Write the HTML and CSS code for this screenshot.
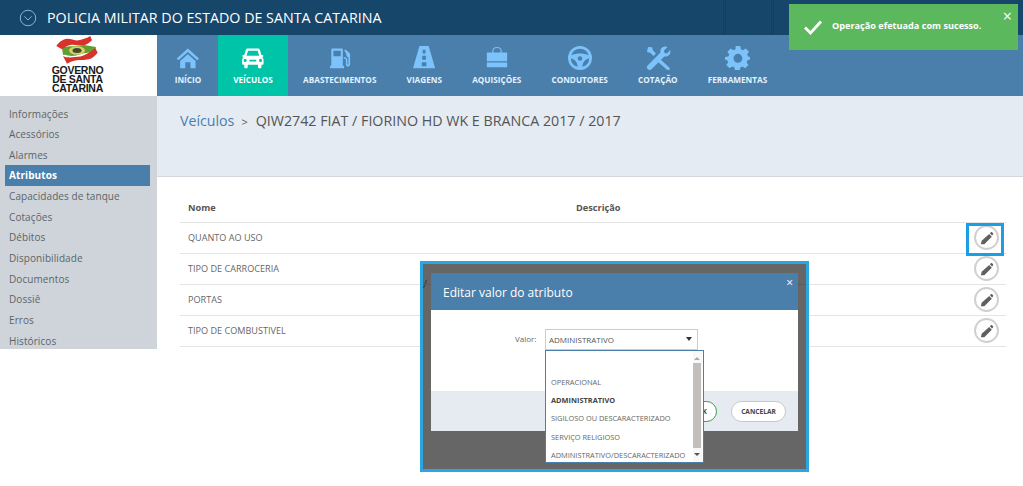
FILE: index.html
```html
<!DOCTYPE html>
<html lang="pt-BR">
<head>
<meta charset="utf-8">
<title>Atributos</title>
<link rel="stylesheet" href="styles.css">
</head>
<body>
<header class="topbar">
  <svg class="topbar-icon" viewBox="0 0 20 20" width="18" height="18"><circle cx="10" cy="10" r="8.600"/><path d="M6 8.200l4 4 4-4"/></svg>
  <span class="topbar-title">POLICIA MILITAR DO ESTADO DE SANTA CATARINA</span>
  <i class="topbar-sep topbar-sep-first"></i>
  <i class="topbar-sep"></i>
</header>
<div class="navrow">
  <div class="logo">
    <svg class="logo-mark" viewBox="0 0 44 28" width="44" height="28">
      <path d="M6 12C13 9 21 11 28 9L40 11 38 17C30 15 23 20 16 20 12 20 9 18 7 19Z" fill="#5fa030"/>
      <ellipse cx="21" cy="14.500" rx="8" ry="4.200" fill="#d9cf63"/>
      <ellipse cx="21" cy="14.500" rx="4.500" ry="2.500" fill="#3f4a30"/>
      <path d="M.3 10C3 6 7 3 11 2.700 15 2.500 19 5 22.700 4.300 27 3.500 31 2 34.300 0L36 4.300C33 7 30 9 27.700 9.300 23 10 20 8.500 16 8.700 12 9 9 11 6 13.300Z" fill="#d8322a"/>
      <path d="M7 20C11 22 15 21.500 19 21 23 20.500 26 20.500 29 18.700 33 17 36 15 39.300 12L41.700 16.700C39 20 36 22.500 32.700 23.300 28 24.500 25 23.500 21 24.300 17 25 14 26 11 27.700Z" fill="#d8322a"/>
    </svg>
    <div class="logo-text"><div>GOVERNO</div><div>DE SANTA</div><div>CATARINA</div></div>
  </div>
  <nav class="mainnav">
    <a class="nav-item nav-first">
      <svg viewBox="-2 -2 30 28"><path d="M13 1L0 12.500l2 2L13 5l11 9.500 2-2zM4 15.500V24h6v-7h6v7h6v-8.500L13 7.500z"/></svg>
      <span>INÍCIO</span>
    </a>
    <a class="nav-item nav-active">
      <svg viewBox="-2 -2 30 28"><path d="M7 1h12c1 0 1.800.6 2.200 1.600L23 8.500h2V11h-1.200C25 12 25.500 13 25.500 14v5c0 .6-.4 1-1 1H23v2.500c0 .8-.6 1.500-1.500 1.500h-1c-.9 0-1.500-.7-1.500-1.500V20H7v2.500C7 23.300 6.400 24 5.500 24h-1C3.600 24 3 23.300 3 22.500V20H1.500c-.6 0-1-.4-1-1v-5c0-1 .5-2 1.700-3H1V8.500h2l1.800-5.900C5.200 1.600 6 1 7 1zm.4 2.500L5.600 9.500h14.800l-1.800-6zM4 13a1.800 1.800 0 100 3.600A1.800 1.800 0 004 13zm18 0a1.800 1.800 0 100 3.600 1.800 1.800 0 000-3.600zM9 14v2h8v-2z" fill-rule="evenodd"/></svg>
      <span>VEÍCULOS</span>
    </a>
    <a class="nav-item">
      <svg viewBox="-2 -2 30 28"><path d="M4 1h11c1 0 1.500.6 1.500 1.500V21h1.500v3H1.500v-3H3V2.500C3 1.600 3.400 1 4 1zm1.500 2.500V10h8.500V3.500zM18 3l1.500-1 4.500 4c.6.500 1 1.300 1 2v11c0 1.800-1 3-2.700 3S20 20.800 20 19v-5c0-.6-.4-1-1-1h-1.500v-1.800H19c1.500 0 2.800 1.300 2.800 2.800v5c0 .6.200 1 .6 1s.6-.4.600-1V11c-1.500 0-2.500-1-2.500-2.500V7z" fill-rule="evenodd"/></svg>
      <span>ABASTECIMENTOS</span>
    </a>
    <a class="nav-item">
      <svg viewBox="0 0 24 26"><path d="M7 0h10l7 24H0zM10.500 4v4h3V4zm-.5 6.500v4.500h4v-4.500zM9.500 17.500V22h5v-4.500z" fill-rule="evenodd"/></svg>
      <span>VIAGENS</span>
    </a>
    <a class="nav-item">
      <svg viewBox="0 0 26 26"><path d="M8 7V4.500C8 2.500 10 1 13 1s5 1.500 5 3.500V7h-1.200V4.500c0-1.200-1.600-2.200-3.800-2.200S9.200 3.300 9.200 4.500V7zM2 7h22v9.500H2zM2 18h22v5H2z"/></svg>
      <span>AQUISIÇÕES</span>
    </a>
    <a class="nav-item">
      <svg viewBox="0 0 26 26"><path d="M13 0a13 13 0 100 26 13 13 0 000-26zm0 3a10 10 0 019.500 7c-3-1.400-6.300-2-9.500-2s-6.500.6-9.500 2A10 10 0 0113 3zM3 13.500c4 .4 7 3.500 7.500 9A10 10 0 013 13.500zm20 0a10 10 0 01-7.500 9c.5-5.500 3.500-8.600 7.500-9zM13 11a2.500 2.500 0 110 5 2.500 2.500 0 010-5z" fill-rule="evenodd"/></svg>
      <span>CONDUTORES</span>
    </a>
    <a class="nav-item">
      <svg viewBox="0 0 26 24"><path d="M3 1l4 .2 1 3.300 3 3-2.500 2.500-3-3L2 6zM20 .500c1 0 2 .2 2.500.7L19 4.500l.5 2.500 2.500.5L25.200 4c.6 2 .1 4-1.300 5.300-1.200 1.100-3 1.500-4.500 1.100L6.500 23.300c-1 1-2.600 1-3.600 0l-.3-.3c-1-1-1-2.600 0-3.600L15.500 6.600c-.5-1.600-.1-3.300 1-4.500C17.400 1.100 18.700.500 20 .500zM15.500 13.500l8.800 8c.8.800.8 2 0 2.400l-.4.100c-.8.400-1.600 0-2.200-.6l-8.700-7.400z"/></svg>
      <span>COTAÇÃO</span>
    </a>
    <a class="nav-item">
      <svg viewBox="-1 0 28 26"><path d="M10.500 0h5l.7 3.600 2.300 1 3-2 3.500 3.500-2 3 1 2.300L27 12v2.500l-3.600.9-1 2.300 2 3-3.500 3.500-3-2-2.300 1-.7 3.400h-5l-.7-3.400-2.300-1-3 2-3.500-3.500 2-3-1-2.300L-1 14.500V12l3.600-.6 1-2.300-2-3L5.100 2.600l3 2 2.300-1zM13 8.500a4.800 4.800 0 100 9.600 4.800 4.800 0 000-9.600z" fill-rule="evenodd"/></svg>
      <span>FERRAMENTAS</span>
    </a>
  </nav>
</div>
<div class="content">
  <aside class="sidebar">
    <a class="side-link">Informações</a>
    <a class="side-link">Acessórios</a>
    <a class="side-link">Alarmes</a>
    <a class="side-link side-active">Atributos</a>
    <a class="side-link">Capacidades de tanque</a>
    <a class="side-link">Cotações</a>
    <a class="side-link">Débitos</a>
    <a class="side-link">Disponibilidade</a>
    <a class="side-link">Documentos</a>
    <a class="side-link">Dossiê</a>
    <a class="side-link">Erros</a>
    <a class="side-link">Históricos</a>
  </aside>
  <main class="main">
    <div class="crumb">
      <a class="crumb-link">Veículos</a><span class="crumb-sep">&gt;</span><span class="crumb-text">QIW2742 FIAT / FIORINO HD WK E BRANCA 2017 / 2017</span>
    </div>
    <div class="table">
      <div class="row head"><div class="col-name">Nome</div><div class="col-desc">Descrição</div></div>
      <div class="row"><div class="col-name">QUANTO AO USO</div><div class="col-desc"></div><button class="edit"><svg viewBox="0 0 16 16"><path d="M1 15l.9-3.900L10.500 3.500l3 3L4.900 15.100zM11.300 2.700l1.200-1.200c.4-.4 1-.4 1.400 0l1 1c.4.4.4 1 0 1.400l-1.200 1.200z"/></svg></button></div>
      <div class="row"><div class="col-name">TIPO DE CARROCERIA</div><div class="col-desc"></div><button class="edit"><svg viewBox="0 0 16 16"><path d="M1 15l.9-3.900L10.500 3.500l3 3L4.900 15.100zM11.300 2.700l1.200-1.200c.4-.4 1-.4 1.400 0l1 1c.4.4.4 1 0 1.400l-1.200 1.200z"/></svg></button></div>
      <div class="row"><div class="col-name">PORTAS</div><div class="col-desc"></div><button class="edit"><svg viewBox="0 0 16 16"><path d="M1 15l.9-3.900L10.500 3.500l3 3L4.900 15.100zM11.300 2.700l1.200-1.200c.4-.4 1-.4 1.400 0l1 1c.4.4.4 1 0 1.400l-1.200 1.200z"/></svg></button></div>
      <div class="row"><div class="col-name">TIPO DE COMBUSTIVEL</div><div class="col-desc"></div><button class="edit"><svg viewBox="0 0 16 16"><path d="M1 15l.9-3.900L10.500 3.500l3 3L4.900 15.100zM11.300 2.700l1.200-1.200c.4-.4 1-.4 1.400 0l1 1c.4.4.4 1 0 1.400l-1.200 1.200z"/></svg></button></div>
      <div class="row"><div class="col-name"></div><div class="col-desc"></div><button class="edit"></button></div>
    </div>
  </main>
</div>

<div class="highlight"></div>

<div class="toast">
  <svg class="toast-check" viewBox="0 0 20 16" width="20" height="16"><path d="M2 8.500l5.500 5.500L18 2.500"/></svg>
  <span class="toast-text">Operação efetuada com sucesso.</span>
  <span class="toast-close">×</span>
</div>

<div class="frame">
  <span class="frame-slash">/</span>
  <div class="frame-line"></div>
  <section class="dialog">
    <div class="dialog-head"><h2>Editar valor do atributo</h2><span class="dialog-close">×</span></div>
    <div class="dialog-body">
      <label class="field-label">Valor:</label>
      <div class="select"><span>ADMINISTRATIVO</span><i class="caret"></i></div>
    </div>
    <div class="dialog-foot">
      <button class="btn btn-ok">OK</button>
      <button class="btn">CANCELAR</button>
    </div>
  </section>
  <div class="dropdown">
    <ul class="options">
      <li>&nbsp;</li>
      <li>OPERACIONAL</li>
      <li class="opt-selected">ADMINISTRATIVO</li>
      <li>SIGILOSO OU DESCARACTERIZADO</li>
      <li>SERVIÇO RELIGIOSO</li>
      <li>ADMINISTRATIVO/DESCARACTERIZADO</li>
    </ul>
    <div class="scroll"><i class="arrow-up"></i><b class="thumb"></b><i class="arrow-down"></i></div>
  </div>
</div>
</body>
</html>
```
FILE: styles.css
```css
* { box-sizing: border-box; }
html, body { margin: 0; padding: 0; height: 486px; overflow: hidden; background: #fff; }
body { position: relative; font-family: "Open Sans", sans-serif; color: #555; }

.topbar { height: 35px; background: #17466b; display: flex; align-items: center; padding-left: 19px; padding-right: 249px; }
.topbar-icon { fill: none; stroke: #7fb6e2; stroke-width: 1.100; flex: none; }
.topbar-title { margin-left: 10px; color: #fff; font-size: 14.250px; }
.topbar-sep { width: 3px; height: 35px; margin-left: 45px; border-left: 1px solid #134062; border-right: 1px solid #134062; }
.topbar-sep-first { margin-left: auto; }

.navrow { height: 61px; display: flex; }
.logo { width: 157px; background: #fff; display: flex; flex-direction: column; align-items: center; padding-top: 1px; padding-right: 2px; }
.logo-mark { flex: none; margin-right: -1px; }
.logo-text { font-family: "Liberation Sans", sans-serif; font-weight: 700; font-size: 10.500px; line-height: 9px; color: #1a1a1a; text-align: center; letter-spacing: -.3px; margin-top: 2px; }
.logo-text div { height: 9px; }

.mainnav { flex: 1; display: flex; background: #4a7eab; }
.nav-item { display: flex; flex-direction: column; align-items: center; padding: 11px 15.100px 0; color: #e3f2ff; font-size: 8.200px; font-weight: 700; white-space: nowrap; }
.nav-item svg { fill: #7cc3fb; height: 24px; width: auto; flex: none; }
.nav-item span { margin-top: 4px; line-height: 12px; }
.nav-first { padding-left: 18px; padding-right: 17px; width: 61px; }
.nav-active { background: #00c4a7; color: #fff; width: 70px; }
.nav-active svg { fill: #fff; }

.content { display: flex; height: 253px; overflow: hidden; }
.sidebar { width: 157px; flex: none; background: #ced4da; padding: 7.500px 7px 0 5px; }
.side-link { display: block; height: 20.650px; line-height: 20px; padding-left: 4px; font-size: 10px; letter-spacing: .08px; color: #5d6468; }
.side-active { background: #4a7eab; color: #fff; font-weight: 700; }

.main { flex: 1; min-width: 0; }
.crumb { height: 81px; background: #e4ebf3; border-bottom: 1px solid #d4d8dc; padding: 14px 0 0 23px; font-size: 14.250px; line-height: 22px; color: #555; white-space: nowrap; }
.crumb-link { color: #4a7eab; font-size: 14.200px; }
.crumb-sep { margin: 0 8px 0 7px; font-size: 11px; }
.table { margin: 15px 17px 0 23px; font-size: 9.100px; color: #666; }
.row { height: 31px; display: flex; align-items: center; padding-bottom: 1px; border-bottom: 1px solid #e4e4e4; position: relative; }
.head { font-size: 9.200px; font-weight: 700; color: #555; padding-bottom: 0; }
.col-name { width: 396px; padding-left: 8px; }
.col-desc { flex: 1; }
.edit { position: absolute; right: 7px; top: 2px; width: 25px; height: 25px; border-radius: 50%; border: 2px solid #d0d0d0; background: #fff; padding: 0; display: flex; align-items: center; justify-content: center; }
.edit svg { fill: #606060; width: 14px; height: 14px; }

.highlight { position: absolute; left: 966px; top: 223px; width: 38px; height: 33px; border: 3px solid #1c9fe2; }

.toast { position: absolute; left: 789px; top: 4px; width: 229px; height: 46px; background: #5cb85c; color: #fff; display: flex; align-items: flex-start; }
.toast-check { fill: none; stroke: #fff; stroke-width: 2.800; margin: 15px 0 0 14px; flex: none; }
.toast-text { margin: 15px 0 0 9px; font-size: 9.150px; font-weight: 700; line-height: 13px; white-space: nowrap; }
.toast-close { position: absolute; right: 6px; top: 4px; font-size: 16px; line-height: 16px; }

.frame { position: absolute; left: 420px; top: 261px; width: 389px; height: 211px; background: #666; border: 3px solid #2aa7e0; }
.frame-slash { position: absolute; left: 0; top: 12px; font-size: 11px; color: #333; }
.frame-line { position: absolute; left: 0; right: 0; top: 20px; height: 1px; background: #5c5c5c; }
.dialog { position: absolute; left: 8px; top: 9px; width: 367px; height: 158px; display: flex; flex-direction: column; background: #fff; }
.dialog-head { height: 37px; background: #4a7eab; display: flex; align-items: center; padding-left: 12px; position: relative; padding-top: 2px; }
.dialog-head h2 { margin: 0; font-size: 12px; font-weight: 400; color: #fff; }
.dialog-close { position: absolute; right: 5px; top: 3px; color: #fff; font-size: 12px; line-height: 14px; }
.dialog-body { height: 81px; position: relative; }
.field-label { position: absolute; left: 84px; top: 23px; font-size: 8px; color: #666; }
.select { position: absolute; left: 114px; top: 19px; width: 153px; height: 21px; border: 1px solid #ccc; background: #fff; padding-left: 3px; font-size: 8px; line-height: 20px; color: #555; }
.caret { position: absolute; right: 5px; top: 7px; border: 3px solid transparent; border-top: 4px solid #333; border-bottom: 0; }
.dialog-foot { flex: 1; background: #e5ebf0; display: flex; justify-content: flex-end; align-items: flex-start; gap: 14px; padding: 10px 12px 0 0; }
.btn { height: 21px; padding: 0; width: 55px; border-radius: 11px; border: 1px solid #c8c8c8; background: #fff; font: 700 6.600px "Open Sans", sans-serif; color: #444; }
.btn-ok { border-color: #3c9a50; width: 40px; text-align: right; padding-right: 9px; }

.dropdown { position: absolute; left: 122px; top: 86px; width: 159px; height: 113px; background: #fff; border: 1px solid #4a7eab; display: flex; }
.options { list-style: none; margin: 0; padding: 3.500px 0 0 5px; flex: 1; min-width: 0; overflow: hidden; font-size: 7.400px; color: #666; }
.options li { height: 18.300px; line-height: 18px; white-space: nowrap; }
.opt-selected { font-weight: 700; color: #444; }
.scroll { width: 9px; flex: none; position: relative; margin-right: 1px; background: #f8f8f8; }
.thumb { position: absolute; left: 0; right: 1px; top: 12px; height: 85px; background: #c2bfbc; }
.arrow-up { position: absolute; left: 1px; top: 6px; border: 3px solid transparent; border-bottom: 3px solid #aaa; border-top: 0; }
.arrow-down { position: absolute; left: 1px; bottom: 6px; border: 3px solid transparent; border-top: 3px solid #555; border-bottom: 0; }
```
